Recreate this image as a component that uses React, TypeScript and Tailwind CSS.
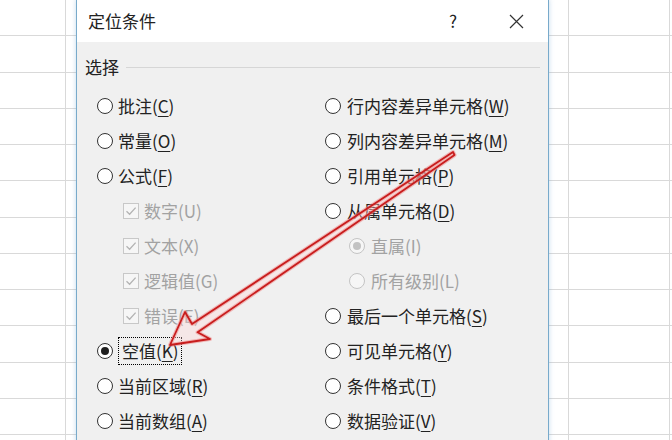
import React from "react";

type Item = {
  kind: "radio" | "check";
  label: string;
  hot: string;
  indent?: boolean;
  disabled?: boolean;
  checked?: boolean;
  focus?: boolean;
};

const leftItems: Item[] = [
  { kind: "radio", label: "批注", hot: "C" },
  { kind: "radio", label: "常量", hot: "O" },
  { kind: "radio", label: "公式", hot: "F" },
  { kind: "check", label: "数字", hot: "U", indent: true, disabled: true, checked: true },
  { kind: "check", label: "文本", hot: "X", indent: true, disabled: true, checked: true },
  { kind: "check", label: "逻辑值", hot: "G", indent: true, disabled: true, checked: true },
  { kind: "check", label: "错误", hot: "E", indent: true, disabled: true, checked: true },
  { kind: "radio", label: "空值", hot: "K", checked: true, focus: true },
  { kind: "radio", label: "当前区域", hot: "R" },
  { kind: "radio", label: "当前数组", hot: "A" },
];

const rightItems: Item[] = [
  { kind: "radio", label: "行内容差异单元格", hot: "W" },
  { kind: "radio", label: "列内容差异单元格", hot: "M" },
  { kind: "radio", label: "引用单元格", hot: "P" },
  { kind: "radio", label: "从属单元格", hot: "D" },
  { kind: "radio", label: "直属", hot: "I", indent: true, disabled: true, checked: true },
  { kind: "radio", label: "所有级别", hot: "L", indent: true, disabled: true },
  { kind: "radio", label: "最后一个单元格", hot: "S" },
  { kind: "radio", label: "可见单元格", hot: "Y" },
  { kind: "radio", label: "条件格式", hot: "T" },
  { kind: "radio", label: "数据验证", hot: "V" },
];

const Radio = ({ item }: { item: Item }) => (
  <span
    className={`flex h-4 w-4 shrink-0 items-center justify-center rounded-full border ${
      item.disabled ? "border-[#c4c4c4] bg-[#f6f6f6]" : "border-[#333333] bg-white"
    }`}
  >
    {item.checked && (
      <span
        className={`h-2 w-2 rounded-full ${item.disabled ? "bg-[#c2c2c2]" : "bg-[#1f1f1f]"}`}
      />
    )}
  </span>
);

const Check = ({ item }: { item: Item }) => (
  <span className="flex h-4 w-4 shrink-0 items-center justify-center border border-[#c8c8c8] bg-[#f6f6f6]">
    {item.checked && (
      <svg width="14" height="14" viewBox="0 0 14 14">
        <path d="M2.5 7.2 L5.6 10.2 L11.6 3.6" fill="none" stroke="#b3b3b3" strokeWidth="1.3" />
      </svg>
    )}
  </span>
);

const Option = ({ item, right }: { item: Item; right?: boolean }) => {
  const text = (
    <span className={item.disabled ? "text-[#a2a2a2]" : "text-[#222222]"}>
      {item.label}(
      <span className={item.disabled ? "" : "underline underline-offset-[3px] decoration-1"}>
        {item.hot}
      </span>
      )
    </span>
  );
  return (
    <div
      className={`flex h-[35px] items-center ${right ? "gap-[6px]" : "gap-[5px]"} ${
        item.indent ? (right ? "pl-[24px]" : "pl-[26px]") : ""
      }`}
    >
      {item.kind === "radio" ? <Radio item={item} /> : <Check item={item} />}
      {item.focus ? (
        <span className="border border-dotted border-black px-[3px] py-[3px]">{text}</span>
      ) : (
        text
      )}
    </div>
  );
};

const SheetGrid = () => (
  <div className="flex flex-col">
    {Array.from({ length: 13 }).map((_, r) => (
      <div key={r} className="flex h-[36.25px] shrink-0 border-b border-[#d9d9d9]">
        <div className="w-[66px] border-r border-[#d9d9d9]" />
        <div className="w-[503px] border-r border-[#d9d9d9]" />
        <div className="w-[101px] border-r border-[#d9d9d9]" />
        <div className="flex-1" />
      </div>
    ))}
  </div>
);

const Arrow = () => {
  const pts = "453,152 192,324 185,312 170,345 210,339 197.6,332.3 454.5,155";
  return (
    <svg
      className="pointer-events-none absolute left-0 top-0"
      width="672"
      height="440"
      viewBox="0 0 672 440"
    >
      <polygon points={pts} fill="rgba(255,215,215,0.35)" stroke="#ee8888" strokeOpacity="0.55" strokeWidth="4" strokeLinejoin="round" />
      <polygon points={pts} fill="none" stroke="#c81d1d" strokeWidth="1.8" strokeLinejoin="round" />
    </svg>
  );
};

export default function App() {
  return (
    <div className="relative h-[440px] w-[672px] overflow-hidden bg-white font-['Noto_Sans_CJK_SC','Noto_Sans',sans-serif] text-[17px] leading-[20px]">
      <SheetGrid />

      <div className="absolute left-[76px] top-[-1px] flex h-[470px] w-[473px] flex-col border border-[#78aacb] bg-[#f0f0f0] shadow-[0_0_5px_rgba(90,150,200,0.35)]">
        <div className="flex h-[42px] shrink-0 items-center bg-white pl-[11px] pr-[9px] text-[#222222]">
          <span>定位条件</span>
          <div className="ml-auto flex items-center gap-[17px]">
            <span className="flex w-[46px] justify-center text-[17px]">?</span>
            <span className="flex w-[46px] justify-center">
              <svg width="15" height="15" viewBox="0 0 15 15">
                <path d="M1 1 L14 14 M14 1 L1 14" stroke="#333333" strokeWidth="1.2" />
              </svg>
            </span>
          </div>
        </div>

        <div className="flex flex-col pl-[8px] pr-[8px] pt-[15px]">
          <div className="flex items-center text-[#222222]">
            <span>选择</span>
            <div className="ml-[7px] h-px flex-1 bg-[#d6d6d6]" />
          </div>
          <div className="mt-[11px] grid grid-cols-[228px_1fr] pl-[12px]">
            {leftItems.map((l, i) => (
              <React.Fragment key={i}>
                <Option item={l} />
                <Option item={rightItems[i]} right />
              </React.Fragment>
            ))}
          </div>
        </div>
      </div>

      <Arrow />
    </div>
  );
}
